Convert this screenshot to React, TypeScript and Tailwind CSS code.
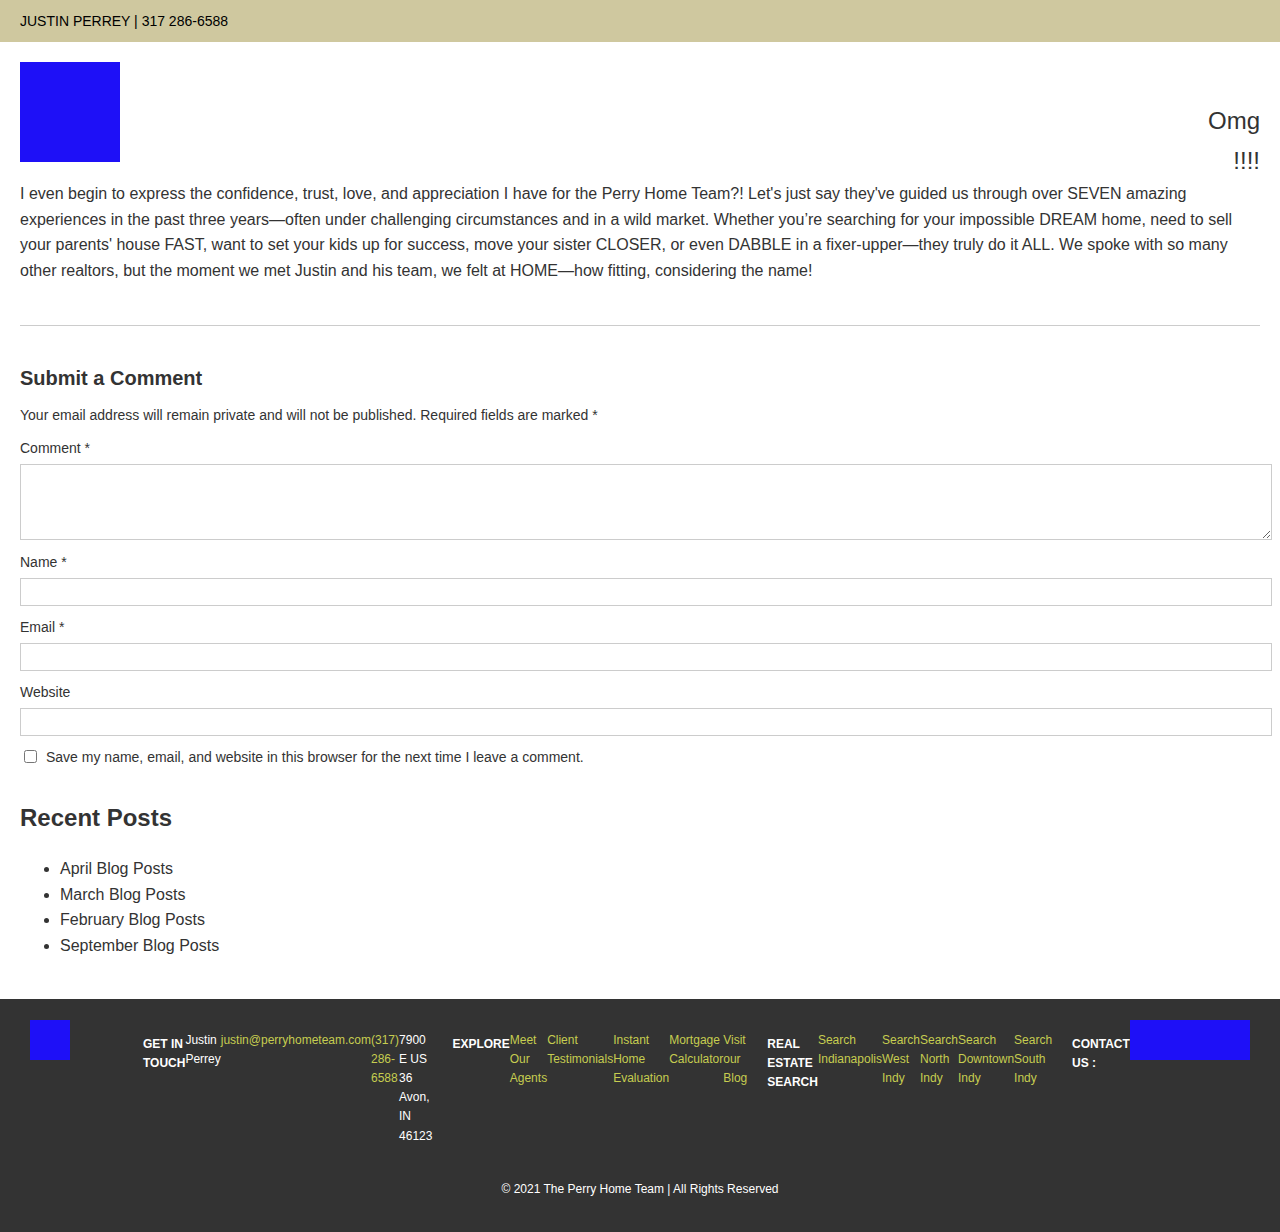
const exploreLinks = ['Meet Our Agents', 'Client Testimonials', 'Instant Home Evaluation', 'Mortgage Calculator', 'Visit our Blog'];
const searchLinks = ['Search Indianapolis', 'Search West Indy', 'Search North Indy', 'Search Downtown Indy', 'Search South Indy'];
const posts = ['April Blog Posts', 'March Blog Posts', 'February Blog Posts', 'September Blog Posts'];

export default function App() {
  return (
    <div className="min-h-[1232px] bg-white font-['Liberation_Sans',Arial,sans-serif] text-[#333]">
      {/* Top bar */}
      <div className="flex h-[42px] items-center bg-[#cfc89f] px-5 text-sm text-black">
        JUSTIN PERREY | 317 286-6588
      </div>

      <main className="px-5 pt-5 pb-10">
        {/* Header */}
        <div className="flex items-start justify-between">
          <div className="h-[100px] w-[100px] bg-[#1e10f7]" />
          <h1 className="mt-[39px] w-min text-right text-2xl leading-10">Omg !!!!</h1>
        </div>

        <p className="text-base leading-[25.7px]">
          I even begin to express the confidence, trust, love, and appreciation I have for the Perry Home Team?! Let's just say they've guided us through over SEVEN amazing experiences in the past three years—often under challenging circumstances and in a wild market. Whether you’re searching for your impossible DREAM home, need to sell your parents' house FAST, want to set your kids up for success, move your sister CLOSER, or even DABBLE in a fixer-upper—they truly do it ALL. We spoke with so many other realtors, but the moment we met Justin and his team, we felt at HOME—how fitting, considering the name!
        </p>

        <hr className="mt-[41px] border-t border-[#cccccc]" />

        {/* Comment form */}
        <h3 className="mt-10 text-xl leading-6 font-bold">Submit a Comment</h3>
        <p className="mt-[15px] text-sm leading-5">
          Your email address will remain private and will not be published. Required fields are marked *
        </p>

        <div className="mt-[13px]">
          <label className="mb-1.5 block text-sm leading-5">Comment *</label>
          <textarea className="block h-[76px] w-[calc(100%+12px)] border border-[#cccccc] bg-white" />
        </div>
        <Field label="Name *" className="mt-3" />
        <Field label="Email *" className="mt-[11px]" />
        <Field label="Website" className="mt-[11px]" />

        <label className="mt-[11px] flex items-center gap-[9px] text-sm leading-5">
          <input type="checkbox" className="ml-1 h-[13px] w-[13px]" />
          Save my name, email, and website in this browser for the next time I leave a comment.
        </label>

        {/* Recent posts */}
        <h2 className="mt-9 text-2xl leading-[29px] font-bold">Recent Posts</h2>
        <ul className="mt-6 list-disc pl-10 text-base leading-[25.7px]">
          {posts.map((p) => (
            <li key={p}>{p}</li>
          ))}
        </ul>
      </main>

      {/* Footer */}
      <footer className="bg-[#333333] px-[30px] pt-[21px] pb-[33px] text-xs text-white">
        <div className="flex items-start gap-5">
          <div className="w-[93px] shrink-0">
            <div className="h-10 w-10 bg-[#1e10f7]" />
          </div>

          <div className="flex items-start pt-[11px]">
            <Heading>GET IN TOUCH</Heading>
            <span className="w-min leading-[1.6]">Justin Perrey</span>
            <a className="leading-[1.6] text-[#c6cd50]">justin@perryhometeam.com</a>
            <a className="w-min leading-[1.6] text-[#c6cd50]">(317) 286-6588</a>
            <span className="w-min leading-[1.6]">7900 E US 36 Avon, IN 46123</span>
          </div>

          <div className="flex items-start pt-[11px]">
            <Heading>EXPLORE</Heading>
            {exploreLinks.map((l) => (
              <a key={l} className="w-min leading-[1.6] text-[#c6cd50]">
                {l}
              </a>
            ))}
          </div>

          <div className="flex items-start pt-[11px]">
            <Heading>REAL ESTATE SEARCH</Heading>
            {searchLinks.map((l) => (
              <a key={l} className="w-min leading-[1.6] text-[#c6cd50]">
                {l}
              </a>
            ))}
          </div>

          <div className="flex items-start">
            <div className="pt-[11px]">
              <Heading>CONTACT US :</Heading>
            </div>
            <div className="h-10 w-[120px] bg-[#1e10f7]" />
          </div>
        </div>

        <p className="mt-[34px] text-center leading-[19px]">© 2021 The Perry Home Team | All Rights Reserved</p>
      </footer>
    </div>
  );
}

function Field({ label, className }: { label: string; className: string }) {
  return (
    <div className={className}>
      <label className="mb-1.5 block text-sm leading-5">{label}</label>
      <input type="text" className="block h-7 w-[calc(100%+12px)] border border-[#cccccc] bg-white" />
    </div>
  );
}

function Heading({ children }: { children: React.ReactNode }) {
  return <h4 className="mt-1 w-min text-xs leading-[19px] font-bold text-white">{children}</h4>;
}
